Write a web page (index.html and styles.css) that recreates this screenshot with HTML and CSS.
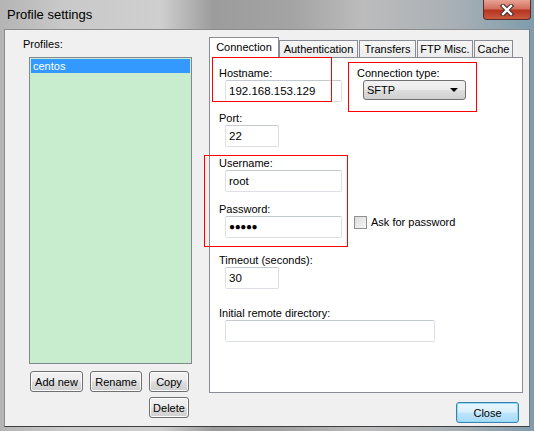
FILE: index.html
```html
<!DOCTYPE html>
<html lang="en">

<head>
    <meta charset="UTF-8">
    <meta name="viewport" content="width=device-width, initial-scale=1.0">
    <title>Profile settings</title>
    <link rel="stylesheet" href="styles.css">
</head>

<body>
    <div class="window">
        <div class="titlebar">
            <span class="title">Profile settings</span>
            <button class="close-x" title="Close">
                <svg width="18" height="12" viewBox="0 0 18 12">
                    <path d="M5 2 L13 10 M13 2 L5 10" stroke="#3a2a2a" stroke-width="4.4" stroke-linecap="square" fill="none" />
                    <path d="M5 2 L13 10 M13 2 L5 10" stroke="#ffffff" stroke-width="2.4" stroke-linecap="square" fill="none" />
                </svg>
            </button>
        </div>

        <div class="client">
            <div class="profiles">
                <label class="caption">Profiles:</label>
                <ul class="listbox">
                    <li class="selected">centos</li>
                </ul>
                <div class="profile-buttons">
                    <button class="btn">Add new</button>
                    <button class="btn">Rename</button>
                    <button class="btn">Copy</button>
                    <button class="btn delete">Delete</button>
                </div>
            </div>

            <div class="settings">
                <div class="tabs">
                    <div class="tab active tab-conn">Connection</div>
                    <div class="tab tab-auth">Authentication</div>
                    <div class="tab tab-transfers">Transfers</div>
                    <div class="tab tab-ftp">FTP Misc.</div>
                    <div class="tab tab-cache">Cache</div>
                </div>

                <div class="panel">
                    <div class="row first">
                        <div class="field host">
                            <label class="caption">Hostname:</label>
                            <div class="input wide">192.168.153.129</div>
                        </div>
                        <div class="field conntype">
                            <label class="caption">Connection type:</label>
                            <div class="select">
                                <span>SFTP</span>
                                <span class="arrow"></span>
                            </div>
                        </div>
                    </div>

                    <div class="field port">
                        <label class="caption">Port:</label>
                        <div class="input small">22</div>
                    </div>

                    <div class="field user">
                        <label class="caption">Username:</label>
                        <div class="input wide">root</div>
                    </div>

                    <div class="field pass">
                        <label class="caption">Password:</label>
                        <div class="row">
                            <div class="input wide dots">●●●●●</div>
                            <label class="check">
                                <span class="box"></span>
                                Ask for password
                            </label>
                        </div>
                    </div>

                    <div class="field timeout">
                        <label class="caption">Timeout (seconds):</label>
                        <div class="input small">30</div>
                    </div>

                    <div class="field remote">
                        <label class="caption">Initial remote directory:</label>
                        <div class="input long"></div>
                    </div>
                </div>

                <div class="dialog-buttons">
                    <button class="btn default">Close</button>
                </div>
            </div>
        </div>
    </div>

    <!-- red annotation boxes drawn over the dialog -->
    <div class="mark mark-host"></div>
    <div class="mark mark-type"></div>
    <div class="mark mark-login"></div>
</body>

</html>
```

FILE: styles.css
```css
body {
    margin: 0;
    width: 534px;
    height: 431px;
    overflow: hidden;
    font-family: 'Liberation Sans', Arial, sans-serif;
    font-size: 11px;
    color: #000;
    background: linear-gradient(90deg, #b4b4b4 0%, #c9c9c9 12%, #cfcfcf 30%, #9c9c9c 40%, #a4a4a4 55%, #bcbcbc 68%, #a9b0b5 85%, #7f9cad 100%);
}

.window {
    display: flex;
    flex-direction: column;
    height: 431px;
    padding: 0 4px 4px 4px;
    box-sizing: border-box;
}

.titlebar {
    height: 29px;
    display: flex;
    align-items: flex-start;
    justify-content: space-between;
}

.title {
    font-size: 13px;
    margin: 7px 0 0 3px;
    color: #000;
}

.close-x {
    width: 48px;
    height: 20px;
    margin-right: -1px;
    padding: 0;
    border: 1px solid #5b2b25;
    border-top: none;
    border-radius: 0 0 4px 4px;
    background: linear-gradient(180deg, #e8a395 0%, #d2705e 45%, #b8341f 55%, #c95a40 100%);
    display: flex;
    align-items: center;
    justify-content: center;
}

.client {
    flex: 1;
    display: flex;
    background-color: #f0f0f0;
    border: 1px solid #8c8c8c;
    border-bottom-color: #3f3f3f;
    border-right-color: #6d7c86;
}

.caption {
    display: block;
    line-height: 13px;
    height: 13px;
    white-space: nowrap;
}

/* profiles column */

.profiles {
    width: 186px;
    padding-left: 18px;
}

.profiles > .caption {
    margin-top: 8px;
}

.listbox {
    list-style: none;
    margin: 6px 0 0 6px;
    padding: 1px;
    width: 163px;
    height: 307px;
    box-sizing: border-box;
    background-color: #c8ecce;
    border: 1px solid #828790;
}

.listbox li {
    height: 14px;
    line-height: 14px;
    padding-left: 2px;
}

.listbox .selected {
    background-color: #3399ff;
    color: #fff;
}

.profile-buttons {
    display: grid;
    grid-template-columns: 53px 52px 40px;
    column-gap: 7px;
    row-gap: 5px;
    margin: 7px 0 0 7px;
}

.btn {
    height: 21px;
    padding: 0;
    font-family: 'Liberation Sans', Arial, sans-serif;
    font-size: 11px;
    color: #000;
    border: 1px solid #707070;
    border-radius: 3px;
    background: linear-gradient(180deg, #f2f2f2 0%, #ebebeb 48%, #dddddd 52%, #cfcfcf 100%);
    box-shadow: inset 0 0 0 1px #fcfcfc;
}

.delete {
    grid-column: 3;
}

/* settings column */

.settings {
    flex: 1;
    display: flex;
    flex-direction: column;
}

.tabs {
    display: flex;
    align-items: flex-end;
    height: 20px;
    margin-top: 7px;
    position: relative;
    z-index: 1;
}

.tab {
    height: 17px;
    box-sizing: border-box;
    border: 1px solid #898c95;
    border-bottom: none;
    background: linear-gradient(180deg, #f6f6f6 0%, #ececec 100%);
    text-align: center;
    line-height: 17px;
    white-space: nowrap;
}

.tab.active {
    height: 21px;
    margin-bottom: -1px;
    background: #fff;
    line-height: 18px;
}

.tab-conn { width: 70px; }
.tab-auth { width: 79px; }
.tab-transfers { width: 57px; margin-left: 1px; }
.tab-ftp { width: 56px; margin-left: 1px; }
.tab-cache { width: 39px; margin-left: 1px; }

.panel {
    width: 314px;
    height: 336px;
    box-sizing: border-box;
    background-color: #fff;
    border: 1px solid #898c95;
    padding: 9px 0 0 9px;
}

.row {
    display: flex;
    align-items: flex-start;
}

.field .input,
.field .select {
    margin-left: 6px;
}

.input {
    height: 22px;
    box-sizing: border-box;
    border: 1px solid #dde1e7;
    border-top-color: #c5cad2;
    border-radius: 2px;
    padding: 0 3px;
    line-height: 20px;
    font-size: 11.5px;
    white-space: nowrap;
}

.wide { width: 117px; }
.small { width: 54px; }
.long { width: 210px; }

.dots {
    font-size: 10px;
    letter-spacing: -0.4px;
    padding-left: 3px;
}

.conntype {
    margin-left: 15px;
}

.select {
    width: 103px;
    height: 20px;
    box-sizing: border-box;
    border: 1px solid #707070;
    border-radius: 3px;
    background: linear-gradient(180deg, #f2f2f2 0%, #ebebeb 48%, #dddddd 52%, #cfcfcf 100%);
    display: flex;
    align-items: center;
    justify-content: space-between;
    padding: 0 7px 0 3px;
}

.arrow {
    width: 0;
    height: 0;
    border-left: 4px solid transparent;
    border-right: 4px solid transparent;
    border-top: 4px solid #000;
}

.port, .user { margin-top: 10px; }
.pass { margin-top: 11px; }
.timeout { margin-top: 16px; }
.remote { margin-top: 18px; }

.check {
    display: flex;
    align-items: center;
    margin-left: 12px;
    line-height: 13px;
}

.box {
    width: 11px;
    height: 11px;
    border: 1px solid #8e8f8f;
    background: linear-gradient(135deg, #dcdcdc 0%, #f6f6f6 100%);
    margin-right: 4px;
}

.dialog-buttons {
    display: flex;
    justify-content: flex-end;
    padding-right: 10px;
    margin-top: 9px;
}

.default {
    width: 63px;
    border-color: #3c7fb1;
    background: linear-gradient(180deg, #eaf6fd 0%, #d9f0fc 48%, #bee6fd 52%, #a7d9f5 100%);
    box-shadow: inset 0 0 0 1px #8fdcf6;
}

/* annotation rectangles */

.mark {
    position: absolute;
    border: 1px solid #ff0000;
    z-index: 5;
}

.mark-host {
    left: 212px;
    top: 57px;
    width: 118px;
    height: 43px;
}

.mark-type {
    left: 348px;
    top: 62px;
    width: 127px;
    height: 48px;
}

.mark-login {
    left: 204px;
    top: 155px;
    width: 142px;
    height: 90px;
}
```
